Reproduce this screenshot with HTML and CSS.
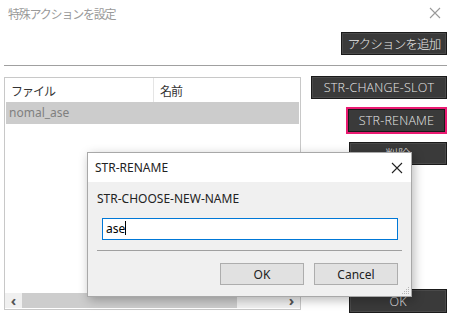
FILE: index.html
```html
<!DOCTYPE html>
<html lang="ja">
<head>
<meta charset="utf-8">
<link rel="stylesheet" href="styles.css">
</head>
<body>
<div class="win">
  <div class="titlebar">
    <span class="title">特殊アクションを設定</span>
    <svg class="close" width="12" height="12" viewBox="0 0 12 12"><path d="M1 1L11 11M11 1L1 11" stroke="#9a9a9a" stroke-width="1.1" fill="none"/></svg>
  </div>
  <div class="toolbar">
    <button class="dark add">アクションを追加</button>
  </div>
  <div class="sep"></div>
  <div class="content">
    <div class="list">
      <div class="head">
        <div class="col c1">ファイル</div>
        <div class="col c2">名前</div>
      </div>
      <div class="row sel">nomal_ase</div>
      <div class="spacer"></div>
      <div class="hscroll">
        <span class="arr">&#8249;</span>
        <div class="track"><div class="thumb"></div></div>
        <span class="arr">&#8250;</span>
      </div>
    </div>
    <div class="side">
      <button class="dark slot">STR-CHANGE-SLOT</button>
      <button class="dark rename">STR-RENAME</button>
      <button class="dark del">削除</button>
      <div class="grow"></div>
      <button class="dark ok">OK</button>
    </div>
  </div>

  <div class="dialog">
    <div class="dtitle">
      <span>STR-RENAME</span>
      <svg width="12" height="12" viewBox="0 0 12 12"><path d="M1 1L11 11M11 1L1 11" stroke="#222" stroke-width="1.1" fill="none"/></svg>
    </div>
    <div class="dbody">
      <div class="dlabel">STR-CHOOSE-NEW-NAME</div>
      <div class="dinput">ase<span class="caret"></span></div>
      <div class="dsep"></div>
      <div class="dbtns">
        <button class="wbtn">OK</button>
        <button class="wbtn">Cancel</button>
      </div>
      <svg class="grip" width="10" height="10" viewBox="0 0 10 10"><g fill="#b5b5b5"><rect x="8" y="2" width="1" height="1"/><rect x="6" y="4" width="1" height="1"/><rect x="8" y="4" width="1" height="1"/><rect x="4" y="6" width="1" height="1"/><rect x="6" y="6" width="1" height="1"/><rect x="8" y="6" width="1" height="1"/><rect x="2" y="8" width="1" height="1"/><rect x="4" y="8" width="1" height="1"/><rect x="6" y="8" width="1" height="1"/><rect x="8" y="8" width="1" height="1"/></g></svg>
    </div>
  </div>
</div>
</body>
</html>
```

FILE: styles.css
```css
html, body {
  margin: 0;
  padding: 0;
  background: #ffffff;
}
body {
  width: 450px;
  height: 314px;
  overflow: hidden;
  font-family: "Noto Sans", "Noto Sans CJK JP", sans-serif;
  font-size: 12px;
}
.win {
  position: relative;
  width: 450px;
  height: 314px;
  display: flex;
  flex-direction: column;
}
.titlebar {
  height: 26px;
  display: flex;
  align-items: center;
  justify-content: space-between;
  padding: 0 9px 0 8px;
}
.title {
  font-family: "Noto Sans CJK JP", sans-serif;
  color: #9a9a9a;
  font-size: 12px;
  letter-spacing: -1.2px;
}
.toolbar {
  display: flex;
  justify-content: flex-end;
  padding: 6px 3px 0 0;
}
button {
  margin: 0;
  padding: 0;
  cursor: default;
}
.dark {
  background: #3a3a3a;
  color: #e8e8e8;
  border: 1px solid #1a1a1a;
  box-shadow: inset 0 0 0 1px #4a4a4a;
  font-family: "Open Sans", "Noto Sans CJK JP", sans-serif;
  font-size: 12.5px;
  font-weight: 300;
  letter-spacing: 0.2px;
}
.add {
  width: 106px;
  height: 23px;
  font-family: "Noto Sans CJK JP", sans-serif;
  letter-spacing: -0.8px;
}
.sep {
  margin: 10px 3px 0 4px;
  height: 1px;
  background: #a0a0a0;
}
.content {
  flex: 1;
  display: flex;
  padding: 10px 3px 2px 4px;
  gap: 10px;
}
.list {
  width: 295px;
  border: 1px solid #c8c8c8;
  display: flex;
  flex-direction: column;
  margin-top: 1px;
  margin-bottom: 2px;
}
.head {
  display: flex;
  height: 24px;
  align-items: center;
  font-family: "Noto Sans CJK JP", sans-serif;
  color: #333;
  font-size: 12px;
}
.col {
  height: 100%;
  display: flex;
  align-items: center;
  letter-spacing: -1px;
  box-sizing: border-box;
}
.c1 {
  width: 149px;
  padding-left: 6px;
  border-right: 1px solid #e5e5e5;
}
.c2 {
  padding-left: 6px;
}
.row {
  height: 22px;
  line-height: 22px;
  margin: 0 1px;
  padding-left: 3px;
  color: #808080;
  font-size: 12px;
}
.sel {
  background: #cccccc;
}
.spacer {
  flex: 1;
}
.hscroll {
  height: 15px;
  display: flex;
  align-items: center;
  background: #f0f0f0;
  margin-bottom: 1px;
}
.arr {
  width: 17px;
  text-align: center;
  font-size: 15px;
  font-weight: bold;
  color: #555;
  line-height: 15px;
}
.track {
  flex: 1;
  height: 15px;
}
.thumb {
  width: 215px;
  height: 15px;
  background: #cdcdcd;
}
.side {
  flex: 1;
  display: flex;
  flex-direction: column;
  align-items: flex-end;
}
.slot {
  width: 136px;
  height: 23px;
}
.rename {
  margin-top: 8px;
  width: 101px;
  height: 27px;
  border: 2px solid #ea1a72;
  box-shadow: inset 0 0 0 1px #1a1a1a;
}
.del {
  margin-top: 8px;
  width: 98px;
  height: 23px;
}
.grow {
  flex: 1;
}
.ok {
  width: 98px;
  height: 24px;
  margin-bottom: -1px;
}

.dialog {
  position: absolute;
  left: 87px;
  top: 152px;
  width: 325px;
  height: 145px;
  background: #f0f0f0;
  border: 1px solid #a8a8a8;
  box-sizing: border-box;
  box-shadow: 2px 3px 10px rgba(0, 0, 0, 0.28);
  display: flex;
  flex-direction: column;
  font-family: "Noto Sans", sans-serif;
}
.dtitle {
  height: 29px;
  background: #ffffff;
  display: flex;
  align-items: center;
  justify-content: space-between;
  padding: 0 8px 0 7px;
  color: #222;
  font-size: 12px;
}
.dbody {
  position: relative;
  flex: 1;
  padding: 0 9px 0 9px;
}
.dlabel {
  margin-top: 8px;
  height: 18px;
  line-height: 18px;
  color: #222;
  font-size: 12px;
}
.dinput {
  margin: 10px 4px 0 5px;
  height: 22px;
  box-sizing: border-box;
  border: 1px solid #0078d7;
  background: #ffffff;
  padding-left: 3px;
  line-height: 19px;
  font-size: 12px;
  color: #000;
}
.caret {
  display: inline-block;
  width: 1px;
  height: 14px;
  background: #000;
  vertical-align: -2px;
}
.dsep {
  margin-top: 10px;
  height: 1px;
  background: #a0a0a0;
}
.dbtns {
  display: flex;
  justify-content: flex-end;
  gap: 10px;
  margin-top: 12px;
  padding-right: 4px;
}
.wbtn {
  width: 84px;
  height: 22px;
  background: #e1e1e1;
  border: 1px solid #adadad;
  font-family: "Noto Sans", sans-serif;
  font-size: 12px;
  color: #222;
}
.grip {
  position: absolute;
  right: 1px;
  bottom: 1px;
}
```
